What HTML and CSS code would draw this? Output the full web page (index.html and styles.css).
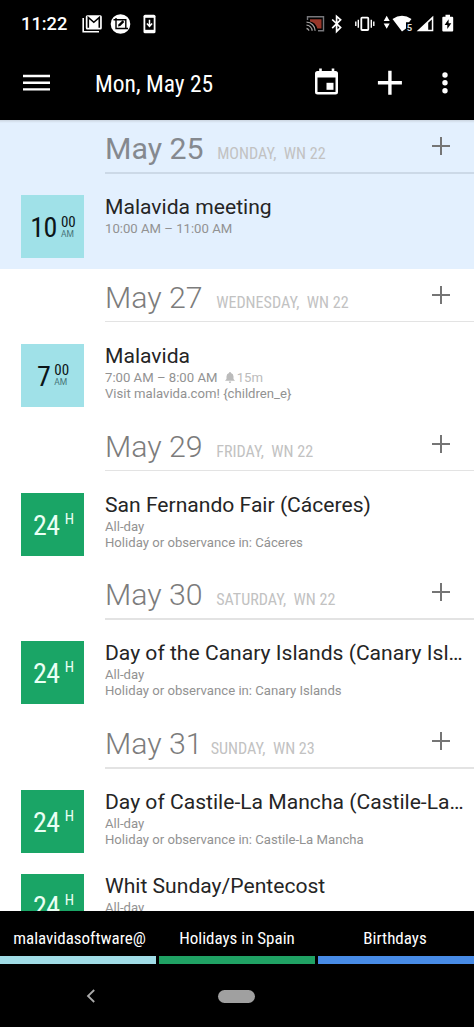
FILE: index.html
```html
<!DOCTYPE html>
<html lang="en">
<head>
<meta charset="utf-8">
<title>Agenda</title>
<link rel="stylesheet" href="styles.css">
</head>
<body>
<div class="screen">
  <div class="status">
    <span class="clock">11:22</span>
    <svg class="status-left" width="80" height="24" viewBox="0 0 80 24">
      <path d="M2.200 6v13.700H18" fill="none" stroke="#fff" stroke-width="1.600"/>
      <path d="M6.300 3.200h13a1.500 1.500 0 0 1 1.500 1.500v11.300a1.500 1.500 0 0 1-1.500 1.500H6.300a1.500 1.500 0 0 1-1.500-1.500V4.700a1.500 1.500 0 0 1 1.500-1.500z" fill="#fff"/>
      <path d="M7.300 15.700V5.500l5.500 4.800 5.500-4.800v10.200" fill="none" stroke="#000" stroke-width="1.600"/>
      <circle cx="39.500" cy="12" r="9.800" fill="#fff"/>
      <path d="M32.500 7.700h12.300v9.500M35 6v10.500h12" fill="none" stroke="#000" stroke-width="1.400"/>
      <path d="M37 14.500l.6-2.300 4-4 1.700 1.700-4 4z" fill="#000"/>
      <rect x="62.500" y="2.700" width="12" height="18.600" rx="1.600" fill="#fff"/>
      <path d="M64.300 5.800h8.400v12h-8.400z" fill="#000"/>
      <path d="M68.500 7.800v6M65.900 11.500l2.600 2.800 2.600-2.800" fill="none" stroke="#fff" stroke-width="1.500"/>
    </svg>
    <svg class="status-right" width="154" height="24" viewBox="0 0 154 24">
      <path d="M2.500 8V4.800h16v14H13" fill="none" stroke="#77777b" stroke-width="1.400"/>
      <path d="M5 7.200h11.500v9.300h-4.200Q10.500 10.200 5 9.500z" fill="#98372a"/>
      <path d="M1.500 10.200a8.600 8.600 0 0 1 8.600 8.600M1.500 13.200a5.600 5.600 0 0 1 5.600 5.600M1.500 16.500a2.300 2.300 0 0 1 2.300 2.300" fill="none" stroke="#a09d9d" stroke-width="1.300"/>
      <path d="M27.200 7.500l8.400 8-4 3.900V4.400l4 3.500-8.400 8.200" fill="none" stroke="#fff" stroke-width="1.700"/>
      <rect x="56.300" y="5.600" width="7" height="12.400" rx=".8" fill="none" stroke="#fff" stroke-width="1.800"/>
      <path d="M53.300 7.800v8M50.800 9.500v4.600M66.300 7.800v8M68.800 9.500v4.600" stroke="#fff" stroke-width="1.400"/>
      <path d="M81.700 3.800l3 5.200h-6zM81.700 16.700l3-5.200h-6z" fill="#fff"/>
      <path d="M87.500 7Q97 .7 106.500 7L104 10.200H101V16.500L97 19.500z" fill="#fff"/>
      <text x="101.700" y="18.500" class="wifi-num">5</text>
      <path d="M111.700 19.300L128.300 3.700V19.300z" fill="#fff"/>
      <path d="M123.200 10.800l3.600-3.400V17.800h-3.600z" fill="#000"/>
      <path d="M138.300 4.700h2.200V2.700h4.500v2h2.200q1 0 1 1v12.800q0 1-1 1h-8.900q-1 0-1-1V5.700q0-1 1-1z" fill="#fff"/>
      <path d="M143.600 7.300l-4 5.700h2.700v4l4-5.700h-2.700z" fill="#000"/>
    </svg>
  </div>
  <div class="bar">
    <svg class="menu" width="28" height="20" viewBox="0 0 28 20"><path d="M0 3h27M0 9.700h27M0 16.400h27" stroke="#fff" stroke-width="2.400"/></svg>
    <h1 class="bar-title cond">Mon, May 25</h1>
    <svg class="bar-icons" width="140" height="30" viewBox="0 0 140 30">
      <path d="M4 4h1.200V1.500h2.600V4h9.900V1.500h2.600V4H21.500q2.500 0 2.500 2.500v18.500q0 2.500-2.500 2.500H3.500Q1 27.500 1 25V6.500Q1 4 3.500 4z" fill="#fff"/>
      <path d="M3.500 10.500h18V25h-18z" fill="#000"/><path d="M12.500 15.800h7v7h-7z" fill="#fff"/>
      <path d="M63.900 15.700h24M75.900 3.700v24" stroke="#fff" stroke-width="3.400"/>
      <circle cx="131" cy="8" r="2.700" fill="#fff"/><circle cx="131" cy="15.800" r="2.700" fill="#fff"/><circle cx="131" cy="23.700" r="2.700" fill="#fff"/>
    </svg>
  </div>

  <main class="agenda">
    <section class="day today">
      <header class="day-head"><h2 class="date">May 25</h2><span class="weekday cond">MONDAY,&nbsp; WN 22</span><i class="add"></i></header>
      <article class="event">
        <div class="tile cyan"><span class="hour cond">10</span><span class="minutes cond"><b>00</b><small>AM</small></span></div>
        <div class="details"><h3>Malavida meeting</h3><p>10:00 AM – 11:00 AM</p></div>
      </article>
    </section>
    <section class="day">
      <header class="day-head"><h2 class="date">May 27</h2><span class="weekday cond">WEDNESDAY,&nbsp; WN 22</span><i class="add"></i></header>
      <article class="event">
        <div class="tile cyan"><span class="hour cond">7</span><span class="minutes cond"><b>00</b><small>AM</small></span></div>
        <div class="details"><h3>Malavida</h3><p>7:00 AM – 8:00 AM <span class="alarm"><svg width="10" height="11" viewBox="0 0 10 11"><path d="M5 0q1 0 1 1 2.500.6 2.500 3.500V7L10 8.800H0L1.500 7V4.500Q1.500 1.600 4 1 4 0 5 0zM3.800 9.500h2.400Q6 11 5 11T3.800 9.500z" fill="#bbb"/></svg>15m</span></p><p>Visit malavida.com! {children_e}</p></div>
      </article>
    </section>
    <section class="day">
      <header class="day-head"><h2 class="date">May 29</h2><span class="weekday cond">FRIDAY,&nbsp; WN 22</span><i class="add"></i></header>
      <article class="event">
        <div class="tile green"><span class="hour cond">24</span><sup class="cond">H</sup></div>
        <div class="details"><h3>San Fernando Fair (Cáceres)</h3><p>All-day</p><p>Holiday or observance in: Cáceres</p></div>
      </article>
    </section>
    <section class="day">
      <header class="day-head"><h2 class="date">May 30</h2><span class="weekday cond">SATURDAY,&nbsp; WN 22</span><i class="add"></i></header>
      <article class="event">
        <div class="tile green"><span class="hour cond">24</span><sup class="cond">H</sup></div>
        <div class="details"><h3>Day of the Canary Islands (Canary Isl…</h3><p>All-day</p><p>Holiday or observance in: Canary Islands</p></div>
      </article>
    </section>
    <section class="day">
      <header class="day-head"><h2 class="date">May 31</h2><span class="weekday narrow-gap cond">SUNDAY,&nbsp; WN 23</span><i class="add"></i></header>
      <article class="event">
        <div class="tile green"><span class="hour cond">24</span><sup class="cond">H</sup></div>
        <div class="details"><h3>Day of Castile-La Mancha (Castile-La…</h3><p>All-day</p><p>Holiday or observance in: Castile-La Mancha</p></div>
      </article>
      <article class="event">
        <div class="tile green"><span class="hour cond">24</span><sup class="cond">H</sup></div>
        <div class="details"><h3>Whit Sunday/Pentecost</h3><p>All-day</p></div>
      </article>
    </section>
  </main>

  <footer class="calendars cond">
    <div class="calendar c-cyan">malavidasoftware@</div>
    <div class="calendar c-green">Holidays in Spain</div>
    <div class="calendar c-blue">Birthdays</div>
  </footer>
  <nav class="system">
    <svg width="10" height="14" viewBox="0 0 10 14"><path d="M8.200 1L2 7l6.200 6" fill="none" stroke="#aaa" stroke-width="1.800"/></svg>
    <span class="pill"></span>
  </nav>
</div>
</body>
</html>
```
FILE: styles.css
```css
* { box-sizing: border-box; }
body { margin: 0; background: #000; font-family: Roboto, sans-serif; }
h1, h2, h3, p { margin: 0; font-weight: 400; }
.screen { width: 474px; height: 1027px; display: flex; flex-direction: column; overflow: hidden; background: #000; }
.cond { font-family: "Roboto Condensed", Roboto, sans-serif; font-stretch: 75%; }

.status { height: 48px; flex: none; display: flex; align-items: center; padding: 0 15.500px 1px 21px; color: #fff; }
.clock { font-size: 18.300px; font-weight: 500; width: 59.500px; }
.status-right { margin-left: auto; }
.wifi-num { font: 700 9.500px Roboto, sans-serif; fill: #ddd; }

.bar { height: 72px; flex: none; display: flex; align-items: center; padding: 0 14px 0 23px; color: #fff; }
.menu { margin-top: -3px; }
.bar-title { font-size: 23.500px; margin-left: 44px; white-space: nowrap; }
.bar-icons { margin: -5px 6px 0 auto; }

.agenda { flex: 1; min-height: 0; overflow: hidden; background: #fff; }
.day-head { height: 64.600px; display: flex; position: relative; }
.day-head::after { content: ""; position: absolute; left: 105px; right: 0; top: 52px; height: 1.500px; background: #e3e3e3; }
.today { background: linear-gradient(#cbd5e0, #e3f0fe 3px); }
.today .day-head::after { background: #ccd9e7; }
.date { margin-left: 105px; font-size: 30.300px; line-height: 58px; font-weight: 300; color: #7c7c7c; white-space: nowrap; }
.today .date { font-weight: 400; color: #85898f; }
.weekday { margin: 4px 0 0 13.500px; font-size: 16.100px; line-height: 60px; color: #c2c2c2; white-space: nowrap; }
.narrow-gap { margin-left: 8px; }
.add { margin: 17px 24px 0 auto; width: 18px; height: 18px; background: linear-gradient(#757575, #757575) center / 18px 2px no-repeat, linear-gradient(#757575, #757575) center / 2px 18px no-repeat; }

.event { height: 84.200px; display: flex; padding: 10.500px 0 0 21px; }
.tile { width: 63px; height: 63px; flex: none; display: flex; justify-content: center; align-items: center; color: #0c1518; }
.cyan { background: #a0e1e8; }
.green { background: #1aa566; color: #e9fff4; }
.hour { font-size: 28px; line-height: 63px; letter-spacing: -.5px; padding: 2px 0 0 1px; }
.minutes { display: flex; flex-direction: column; margin-left: 4px; }
.minutes b { font-size: 15px; line-height: 15px; font-weight: 400; }
.minutes small { font-family: Roboto, sans-serif; font-stretch: 100%; font-size: 8.500px; line-height: 9px; color: #477479; }
.tile sup { font-size: 15px; line-height: 15px; margin: -10px 0 0 5px; }
.green .hour { padding-left: 2px; }
.details { margin-left: 21px; white-space: nowrap; }
.details h3 { font-size: 21.100px; line-height: 23px; color: #252525; }
.details p { font-size: 13.150px; line-height: 16px; color: #929292; }
.details h3 + p { margin-top: 3px; }
.alarm { color: #bbb; margin-left: 4px; }
.alarm svg { vertical-align: -1px; margin-right: 2px; }

.calendars { height: 54px; flex: none; display: grid; grid-template-columns: repeat(3, 1fr); gap: 3px; color: #fff; font-size: 17px; text-align: center; }
.calendar { line-height: 54px; border-bottom: 8px solid; white-space: nowrap; height: 53px; }
.c-cyan { border-color: #a0dce6; padding-left: 3px; }
.c-green { border-color: #20a264; }
.c-blue { border-color: #478be6; padding-right: 2px; }
.system { height: 62px; flex: none; display: grid; grid-template-columns: 96px 122px 37px; align-items: center; }
.system svg { justify-self: end; }
.pill { grid-column: 3; height: 13px; border-radius: 7px; background: #a0a0a0; }
```
